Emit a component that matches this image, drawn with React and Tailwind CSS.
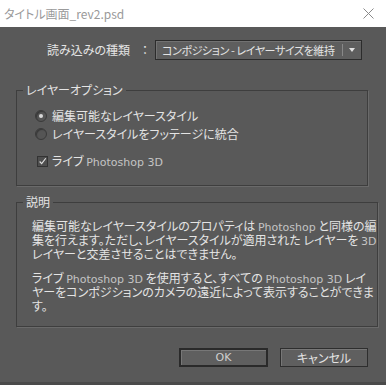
const font = { fontFamily: '"Noto Sans CJK JP", "Noto Sans", sans-serif' };

const Radio = ({ checked }) => (
  <span className="w-[12px] h-[12px] rounded-full border border-[#3a3a3a] bg-[#555] shadow-[inset_1px_1px_1px_rgba(0,0,0,0.35)] flex items-center justify-center shrink-0">
    {checked && <span className="w-[4px] h-[4px] rounded-full bg-[#d8d8d8]"></span>}
  </span>
);

const Pro = ({ children }) => (
  <span className="font-['DejaVu_Sans',sans-serif] text-[11px] leading-none text-[#c4c4c4]">{children}</span>
);

export default function App() {
  return (
    <div className="w-[386px] h-[385px] bg-[#595959] flex flex-col text-[12px] text-[#e4e4e4] border-b-[3px] border-[#4a4a4a] [font-feature-settings:'palt']" style={font}>
      {/* Title bar */}
      <div className="h-[27px] bg-white flex items-center justify-between pl-[4px] pr-[12px] shrink-0">
        <p className="text-[12px] text-[#9a9a9a] leading-none">タイトル画面_rev2.psd</p>
        <svg width="11" height="11" viewBox="0 0 11 11">
          <path d="M0.5 0.5 L10.5 10.5 M10.5 0.5 L0.5 10.5" stroke="#8a8a8a" strokeWidth="1" />
        </svg>
      </div>

      {/* Import type */}
      <div className="flex items-center justify-end pr-[24px] mt-[13px]">
        <p className="leading-none whitespace-nowrap">読み込みの種類</p>
        <span className="ml-[8px] w-[14px] text-center leading-none">：</span>
        <div className="ml-[3px] w-[207px] h-[20px] flex items-center bg-[#5e5e5e] border border-[#2c2c2c] shadow-[inset_1px_1px_0_#727272]">
          <p className="flex-1 pl-[6px] leading-none whitespace-nowrap text-[11px] tracking-[-0.4px]">コンポジション - レイヤーサイズを維持</p>
          <div className="w-px h-[12px] bg-[#888]"></div>
          <svg width="18" height="10" viewBox="0 0 18 10">
            <path d="M6 3 L12 3 L9 7 Z" fill="#e0e0e0" />
          </svg>
        </div>
      </div>

      {/* Layer options */}
      <fieldset className="mt-[23px] ml-[16px] mr-[18px] h-[103px] border border-[#3e3e3e] shadow-[1px_1px_0_#6a6a6a]">
        <legend className="ml-[6px] px-[3px] leading-[14px]">レイヤーオプション</legend>
        <div className="flex flex-col mt-[10px] pl-[18px]">
          <label className="flex items-center gap-[5px] h-[18px]">
            <Radio checked />
            <span>編集可能なレイヤースタイル</span>
          </label>
          <label className="flex items-center gap-[5px] h-[18px]">
            <Radio />
            <span>レイヤースタイルをフッテージに統合</span>
          </label>
          <label className="flex items-center gap-[4px] h-[18px] mt-[9px] pl-[2px]">
            <span className="w-[11px] h-[11px] border border-[#333] bg-[#4e4e4e] flex items-center justify-center">
              <svg width="11" height="11" viewBox="0 0 11 11">
                <path d="M2 5.5 L4.5 8 L9.5 1.5" stroke="#e0e0e0" strokeWidth="1.4" fill="none" />
              </svg>
            </span>
            <span>ライブ <Pro>Photoshop 3D</Pro></span>
          </label>
        </div>
      </fieldset>

      {/* Description */}
      <fieldset className="mt-[9px] ml-[16px] mr-[18px] h-[132px] border border-[#3e3e3e] shadow-[1px_1px_0_#6a6a6a]">
        <legend className="ml-[6px] px-[3px] leading-[14px]">説明</legend>
        <div className="mt-[10px] pl-[15px] leading-[14px] flex flex-col gap-[10px] whitespace-nowrap">
          <p>
            編集可能なレイヤースタイルのプロパティは <Pro>Photoshop</Pro> と同様の編<br />
            集を行えます。ただし、レイヤースタイルが適用された レイヤーを <Pro>3D</Pro><br />
            レイヤーと交差させることはできません。
          </p>
          <p>
            ライブ <Pro>Photoshop 3D</Pro> を使用すると、すべての <Pro>Photoshop 3D</Pro> レイ<br />
            ヤーをコンポジションのカメラの遠近によって表示することができま<br />
            す。
          </p>
        </div>
      </fieldset>

      {/* Buttons */}
      <div className="flex justify-end gap-[12px] pr-[18px] mt-[21px]">
        <button className="w-[89px] h-[19px] border-2 border-[#2a2a2a] bg-[#5f5f5f] shadow-[inset_1px_1px_0_#777] text-[#cfcfcf] leading-none font-['DejaVu_Sans',sans-serif] text-[11px]">OK</button>
        <button className="w-[88px] h-[19px] border border-[#2e2e2e] bg-[#5f5f5f] shadow-[inset_1px_1px_0_#777] leading-none">キャンセル</button>
      </div>
    </div>
  );
}
